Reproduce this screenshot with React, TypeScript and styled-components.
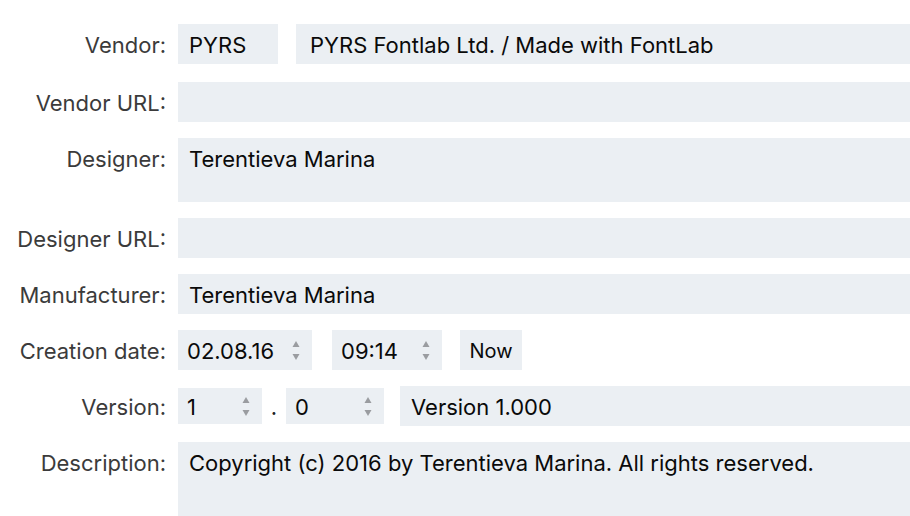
import React from 'react'
import styled, { createGlobalStyle } from 'styled-components'

const GlobalStyle = createGlobalStyle`
  html, body {
    margin: 0;
    padding: 0;
    background: #ffffff;
  }
  body {
    font-family: Inter, 'Liberation Sans', sans-serif;
    -webkit-font-smoothing: antialiased;
  }
`

const Form = styled.div`
  display: grid;
  grid-template-columns: 166px 1fr;
  column-gap: 12px;
  row-gap: 16px;
  padding-top: 24px;
  width: 910px;
  align-items: start;
`

const Label = styled.div`
  height: 40px;
  text-align: right;
  font-size: 22px;
  line-height: 42px;
  color: #3b3b3b;
  white-space: nowrap;
`

const Line = styled.div<{ $gap?: number; $extra?: number }>`
  display: flex;
  align-items: center;
  height: 40px;
  gap: ${(p) => p.$gap ?? 0}px;
  margin-bottom: ${(p) => p.$extra ?? 0}px;
`

const Field = styled.div<{ $width?: number; $height?: number; $pad?: number }>`
  box-sizing: border-box;
  background: #ebeff3;
  height: ${(p) => p.$height ?? 40}px;
  ${(p) => (p.$width ? `width: ${p.$width}px; flex: none;` : 'flex: 1;')}
  padding-left: ${(p) => p.$pad ?? 11}px;
  font-size: 22px;
  line-height: 42px;
  color: #0a0a0a;
  white-space: nowrap;
  overflow: hidden;
`

const Stepper = styled.div<{ $width: number; $height?: number }>`
  box-sizing: border-box;
  display: flex;
  align-items: center;
  justify-content: space-between;
  width: ${(p) => p.$width}px;
  height: ${(p) => p.$height ?? 40}px;
  flex: none;
  background: #ebeff3;
  padding: 2px 12px 0 9px;
  font-size: 22px;
  color: #0a0a0a;
`

const Dot = styled.span`
  width: 24px;
  height: 40px;
  text-align: center;
  font-size: 22px;
  color: #222222;
  line-height: 42px;
`

const Spacer = styled.div<{ $w: number }>`
  width: ${(p) => p.$w}px;
  flex: none;
`

const NowButton = styled.div`
  box-sizing: border-box;
  width: 62px;
  height: 40px;
  background: #ebeff3;
  font-size: 20px;
  line-height: 42px;
  text-align: center;
  color: #0a0a0a;
`

const ArrowIcon = styled.svg`
  margin-top: -2px;
  flex: none;
`

const Arrows = () => (
  <ArrowIcon width="8" height="19" viewBox="0 0 8 19">
    <path d="M4 0 L7.5 6 L0.5 6 Z" fill="#9a9ca0" />
    <path d="M0.5 13 L7.5 13 L4 19 Z" fill="#9a9ca0" />
  </ArrowIcon>
)

const NumberField: React.FC<{ value: string; width: number; height?: number }> = ({
  value,
  width,
  height,
}) => (
  <Stepper $width={width} $height={height}>
    <span>{value}</span>
    <Arrows />
  </Stepper>
)

export default function App() {
  return (
    <>
      <GlobalStyle />
      <Form>
        <Label>Vendor:</Label>
        <Line $gap={18} $extra={2}>
          <Field $width={100}>PYRS</Field>
          <Field $pad={14}>PYRS Fontlab Ltd. / Made with FontLab</Field>
        </Line>

        <Label>Vendor URL:</Label>
        <Field />

        <Label>Designer:</Label>
        <Field $height={64}>Terentieva Marina</Field>

        <Label>Designer URL:</Label>
        <Field />

        <Label>Manufacturer:</Label>
        <Field>Terentieva Marina</Field>

        <Label>Creation date:</Label>
        <Line>
          <NumberField value="02.08.16" width={134} />
          <Spacer $w={20} />
          <NumberField value="09:14" width={110} />
          <Spacer $w={18} />
          <NowButton>Now</NowButton>
        </Line>

        <Label>Version:</Label>
        <Line>
          <NumberField value="1" width={84} height={36} />
          <Dot>.</Dot>
          <NumberField value="0" width={98} height={36} />
          <Spacer $w={16} />
          <Field>Version 1.000</Field>
        </Line>

        <Label>Description:</Label>
        <Field $height={80}>Copyright (c) 2016 by Terentieva Marina. All rights reserved.</Field>
      </Form>
    </>
  )
}
